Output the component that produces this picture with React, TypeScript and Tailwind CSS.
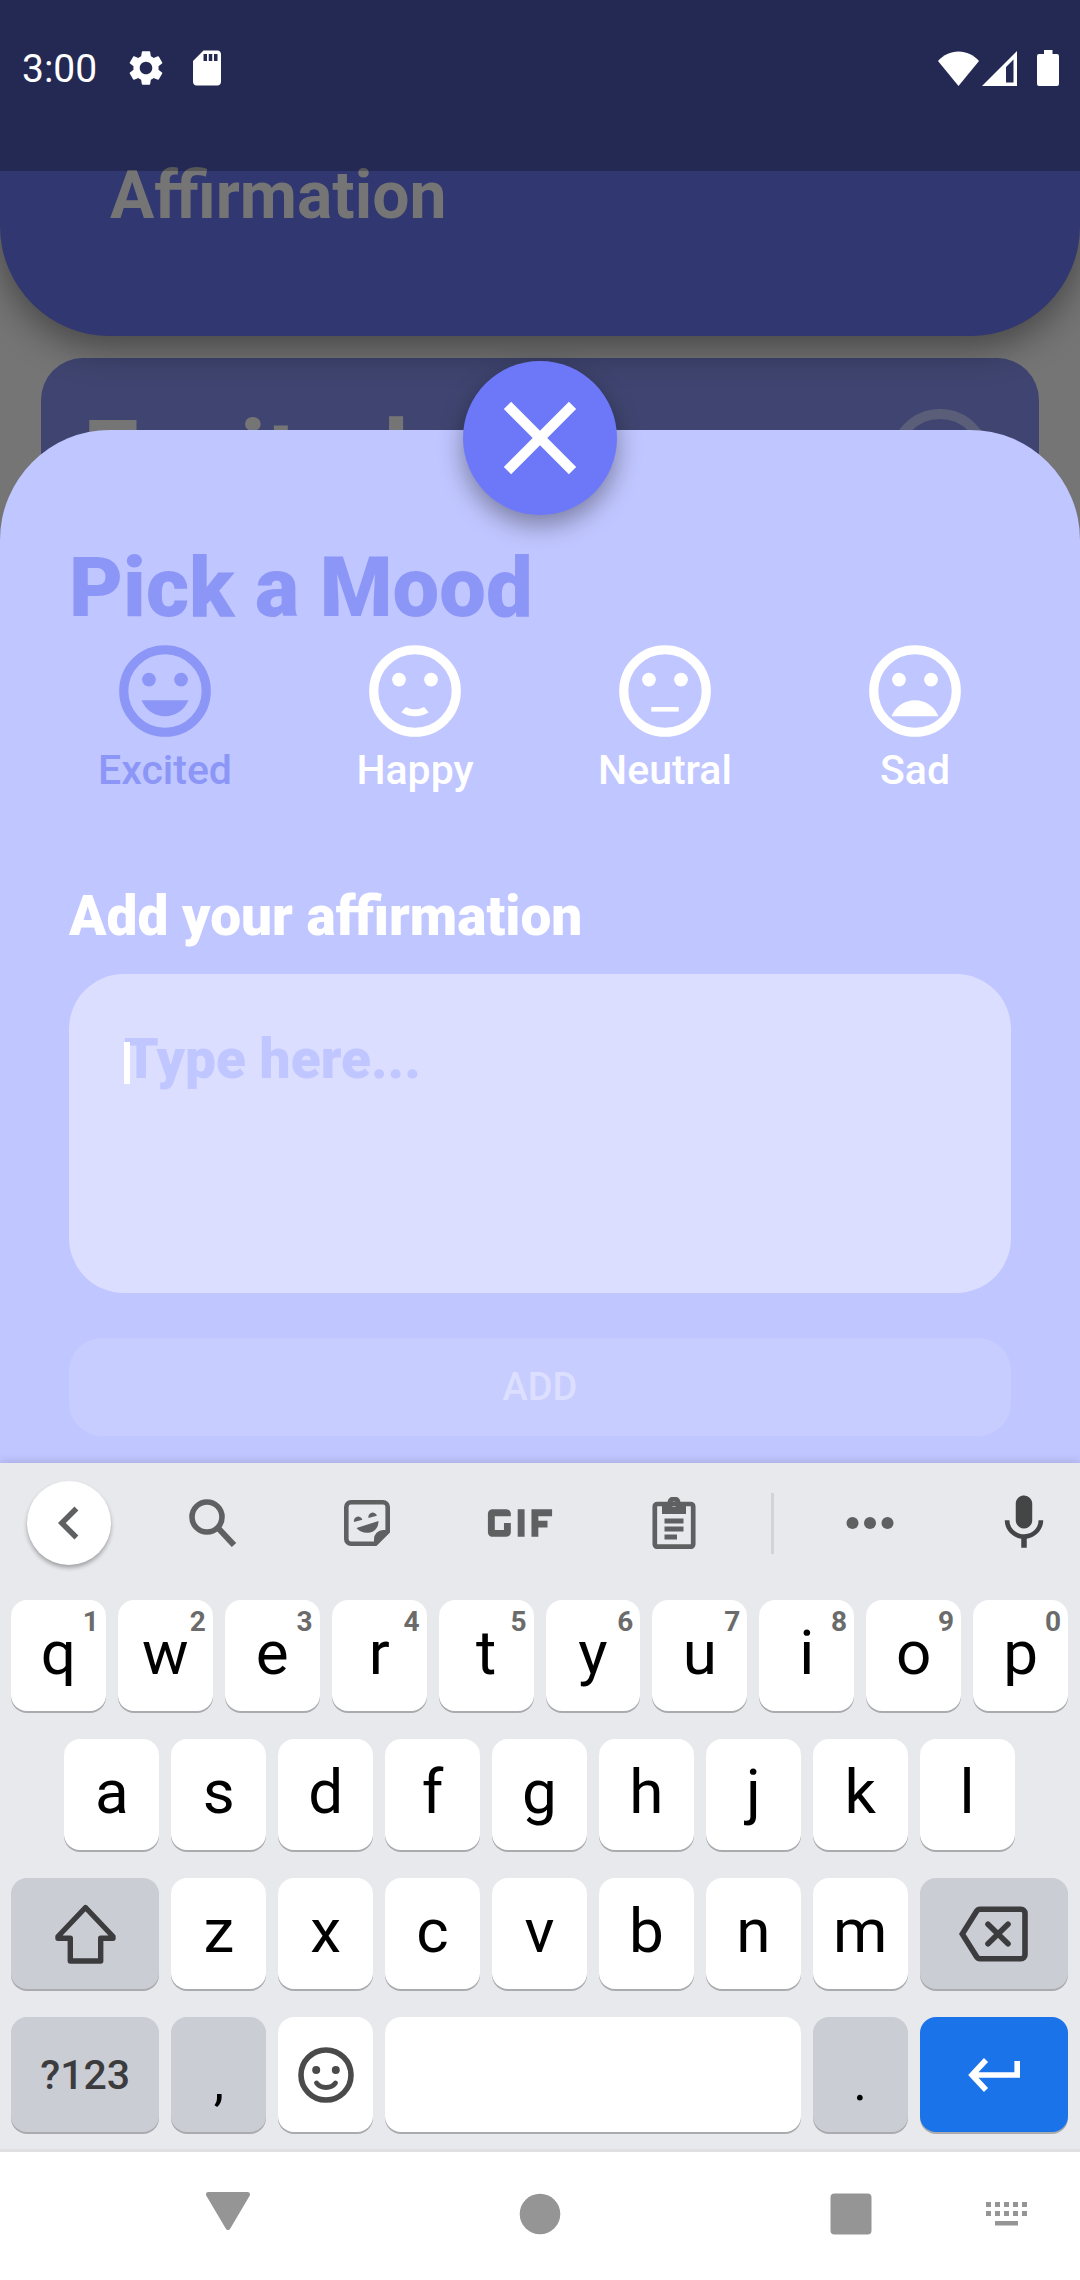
import { useState } from "react";
import type { ReactNode } from "react";
import { MdChevronLeft, MdClose, MdGif, MdMic, MdSdStorage, MdSettings } from "react-icons/md";

const MOUTHS = {
  excited: "M12 17.5c2.33 0 4.31-1.46 5.11-3.5H6.89c.8 2.04 2.78 3.5 5.11 3.5z",
  happy:
    "M12 16c-.73 0-1.38-.18-1.96-.52-.12.14-.86.98-1.01 1.15.86.55 1.87.87 2.97.87 1.11 0 2.12-.33 2.98-.88-.97-1.09-.01-.02-1.01-1.15-.59.35-1.24.53-1.97.53z",
  neutral: "M9 15.5h6v1H9z",
  sad: "M12 14c-2.33 0-4.32 1.45-5.12 3.5h10.24c-.8-2.05-2.79-3.5-5.12-3.5z",
};

type MoodId = keyof typeof MOUTHS;

const MOODS: { id: MoodId; label: string }[] = [
  { id: "excited", label: "Excited" },
  { id: "happy", label: "Happy" },
  { id: "neutral", label: "Neutral" },
  { id: "sad", label: "Sad" },
];

function Face({ mood, className }: { mood: MoodId; className: string }) {
  return (
    <svg viewBox="0 0 24 24" className={className} fill="currentColor" aria-hidden="true">
      <circle cx="12" cy="12" r="9" fill="none" stroke="currentColor" strokeWidth="2" />
      <circle cx="8.5" cy="9.5" r="1.5" />
      <circle cx="15.5" cy="9.5" r="1.5" />
      <path d={MOUTHS[mood]} />
    </svg>
  );
}

function StatusBar() {
  return (
    <div className="absolute inset-x-0 top-0 z-30 h-[171px] bg-black/25 text-white">
      <div className="flex h-[136px] items-center justify-between pr-[21px] pl-[22px]">
        <div className="flex items-center">
          <span className="pt-[2px] text-[39px] leading-none">3:00</span>
          <MdSettings className="ml-[28px] size-[42px]" />
          <MdSdStorage className="ml-[19px] size-[42px]" />
        </div>
        <div className="flex items-center">
          <svg viewBox="0 0 41 35" className="h-[35px] w-[41px]" fill="currentColor" aria-hidden="true">
            <path d="M20.5 35 0 10C5.500 4 12.500 0.500 20.500 0.500S35.500 4 41 10z" />
          </svg>
          <svg viewBox="0 0 35 35" className="ml-[3px] size-[35px]" fill="currentColor" aria-hidden="true">
            <path fillRule="evenodd" d="M0 35 35 0v35zM24 16v15.500h7.500V8.500z" />
          </svg>
          <svg viewBox="0 0 22 36" className="ml-[20px] h-[36px] w-[22px]" fill="currentColor" aria-hidden="true">
            <path d="M7 0h8.500v4H20a2 2 0 0 1 2 2v28a2 2 0 0 1-2 2H2a2 2 0 0 1-2-2V6a2 2 0 0 1 2-2h5z" />
          </svg>
        </div>
      </div>
    </div>
  );
}

function Backdrop() {
  return (
    <div>
      <header className="relative z-10 flex h-[336px] items-end rounded-b-[110px] bg-[#313770] px-[110px] pb-[101px] shadow-[0_12px_36px_rgba(0,0,0,0.4)]">
        <h1 className="text-[66px] leading-[78px] font-bold text-[#757575]">Affirmation</h1>
      </header>
      <div className="mx-[41px] mt-[22px] flex h-[180px] items-start justify-between rounded-[42px] bg-[#3f4570] pr-[39px] pl-[42px]">
        <h2 className="pt-[40px] text-[99px] leading-[116px] font-bold text-[#757575]">Excited</h2>
        <Face mood="excited" className="mt-[41px] size-[120px] text-[#5b5e78]" />
      </div>
    </div>
  );
}

function MoodSheet() {
  const [mood, setMood] = useState<MoodId>("excited");
  const [text, setText] = useState("");
  return (
    <main className="relative z-20 -mt-[108px] flex flex-1 flex-col rounded-t-[110px] bg-[#c0c6ff] px-[69px] pt-[110px] pb-[27px]">
      <button
        type="button"
        aria-label="Close"
        className="absolute -top-[69px] left-1/2 flex size-[154px] -translate-x-1/2 items-center justify-center rounded-full bg-[#6d78f8] text-white shadow-[0_10px_24px_rgba(0,0,0,0.36)]"
      >
        <MdClose className="size-[124px]" />
      </button>
      <h2 className="text-[83px] leading-[96px] font-black text-[#8b96f7]">Pick a Mood</h2>
      <div className="-mx-[29px] grid grid-cols-4">
        {MOODS.map(({ id, label }) => (
          <button
            key={id}
            type="button"
            aria-pressed={mood === id}
            onClick={() => setMood(id)}
            className={
              mood === id
                ? "flex flex-col items-center text-[#8b96f7]"
                : "flex flex-col items-center text-white"
            }
          >
            <Face mood={id} className="size-[110px]" />
            <span className="text-[41px] leading-[48px] font-medium">{label}</span>
          </button>
        ))}
      </div>
      <label htmlFor="affirmation" className="mt-[90px] text-[55px] leading-[64px] font-black text-white">
        Add your affirmation
      </label>
      <div className="relative mt-[26px]">
        <textarea
          id="affirmation"
          value={text}
          onChange={(event) => setText(event.target.value)}
          placeholder="Type here..."
          className="block h-[319px] w-full resize-none rounded-[55px] bg-[#dbdefe] px-[55px] pt-[53px] text-[55px] leading-[64px] font-black text-white caret-white outline-none placeholder:text-[#c0c6ff]"
        />
        <span className="absolute top-[68px] left-[55px] h-[42px] w-[6px] bg-white" />
      </div>
      <button
        type="button"
        disabled
        className="mt-[45px] h-[98px] rounded-[33px] bg-[#c8cdff] text-[38px] font-medium text-[#dcdfff]"
      >
        ADD
      </button>
    </main>
  );
}

function Tool({ label, children, className }: { label: string; children: ReactNode; className: string }) {
  return (
    <button type="button" aria-label={label} className={className}>
      {children}
    </button>
  );
}

const TOOL = "flex h-[84px] flex-1 items-center justify-center";

function Toolbar() {
  return (
    <div className="flex h-[137px] items-start pt-[18px] text-[#5f6062]">
      <Tool
        label="Back"
        className="mr-[25px] ml-[27px] flex size-[84px] items-center justify-center rounded-full bg-white shadow-[0_3px_4px_rgba(0,0,0,0.3)]"
      >
        <MdChevronLeft className="size-[66px]" />
      </Tool>
      <Tool label="Search" className={TOOL}>
        <svg viewBox="0 0 48 48" className="size-[48px]" fill="none" stroke="currentColor" strokeWidth="5.6" aria-hidden="true">
          <circle cx="18" cy="18" r="15" />
          <path d="M30 30 45 46" strokeWidth="6" />
        </svg>
      </Tool>
      <Tool label="Stickers" className={TOOL}>
        <svg viewBox="0 0 46 46" className="size-[46px]" fill="currentColor" aria-hidden="true">
          <path
            d="M7 2.300H39a4.700 4.700 0 0 1 4.700 4.700V31.500L31.500 43.700H7A4.700 4.700 0 0 1 2.300 39V7A4.700 4.700 0 0 1 7 2.300z"
            fill="none"
            stroke="currentColor"
            strokeWidth="4.600"
          />
          <path d="M30 45V39a9 9 0 0 1 9-9h6z" />
          <path d="M10 22a4.300 4.300 0 1 1 8.400-2.200z" />
          <path d="M24.500 18a4.300 4.300 0 1 1 8.400-2.200z" />
          <path d="M12.500 28 34.500 21C34.500 35 18 35.500 12.500 28z" />
        </svg>
      </Tool>
      <Tool label="GIF" className={TOOL}>
        <MdGif className="size-[110px]" />
      </Tool>
      <Tool label="Clipboard" className={TOOL}>
        <svg viewBox="0 0 44 52" className="h-[52px] w-[44px]" fill="currentColor" aria-hidden="true">
          <rect x="2.800" y="7" width="38.400" height="42.700" rx="2.500" fill="none" stroke="currentColor" strokeWidth="4.700" />
          <path fillRule="evenodd" d="M10 17V5h5.500a6.600 6.600 0 0 1 13 0H34v12zM22 4.600a2.600 2.600 0 1 0 0 5.200 2.600 2.600 0 0 0 0-5.200z" />
          <path d="M12.500 21.500h19v5h-19zM12.500 29.500h19v5h-19zM12.500 37.500h12.500v5h-12.500z" />
        </svg>
      </Tool>
      <div className="mx-[20px] mt-[12px] h-[61px] w-[3px] bg-[#d1d3d6]" />
      <Tool label="More" className="flex h-[84px] w-[151px] items-center justify-center">
        <svg viewBox="0 0 48 12" className="h-[12px] w-[48px]" fill="currentColor" aria-hidden="true">
          <circle cx="6.500" cy="6" r="6" />
          <circle cx="24" cy="6" r="6" />
          <circle cx="41.500" cy="6" r="6" />
        </svg>
      </Tool>
      <Tool
        label="Voice input"
        className="flex h-[84px] w-[135px] items-center justify-center pl-[22px] text-[#444547]"
      >
        <MdMic className="size-[66px]" />
      </Tool>
    </div>
  );
}

const LETTER =
  "relative col-span-2 flex h-[111px] items-center justify-center rounded-[16px] bg-white pb-[6px] text-[62px] leading-none text-black shadow-[0_2px_0_#a9abae]";

function Letter({ char, hint, start }: { char: string; hint?: string; start?: boolean }) {
  return (
    <button type="button" className={start ? `${LETTER} col-start-2` : LETTER}>
      {char}
      {hint && (
        <span className="absolute top-[6px] right-[7px] text-[28px] leading-[32px] font-bold text-[#6b6b6b]">
          {hint}
        </span>
      )}
    </button>
  );
}

function Keyboard() {
  return (
    <section
      aria-label="Keyboard"
      className="relative z-20 bg-[#e8e9ed] pb-[17px] shadow-[0_-2px_8px_rgba(0,0,0,0.12)]"
    >
      <Toolbar />
      <div className="grid grid-cols-20 gap-x-[12px] gap-y-[28px] pr-[12px] pl-[11px]">
        {[..."qwertyuiop"].map((char, i) => (
          <Letter key={char} char={char} hint={String((i + 1) % 10)} />
        ))}
        {[..."asdfghjkl"].map((char, i) => (
          <Letter key={char} char={char} start={i === 0} />
        ))}
        <button
          type="button"
          aria-label="Shift"
          className="col-span-3 col-start-1 flex h-[111px] items-center justify-center rounded-[16px] bg-[#cbcdd5] text-[#3c3c3e] shadow-[0_2px_0_#a9abae]"
        >
          <svg viewBox="0 0 61 60" className="h-[60px] w-[61px]" fill="none" stroke="currentColor" strokeWidth="5.400" strokeLinejoin="round" aria-hidden="true">
            <path d="M30.500 3.500 58 32.500V34.300H45.700V57H15.300V34.300H3V32.500z" />
          </svg>
        </button>
        {[..."zxcvbnm"].map((char) => (
          <Letter key={char} char={char} />
        ))}
        <button
          type="button"
          aria-label="Backspace"
          className="col-span-3 flex h-[111px] items-center justify-center rounded-[16px] bg-[#cbcdd5] text-[#3c3c3e] shadow-[0_2px_0_#a9abae]"
        >
          <svg viewBox="0 0 69 56" className="h-[56px] w-[69px]" fill="none" stroke="currentColor" strokeWidth="5.600" aria-hidden="true">
            <path d="M21 3.300H62a4 4 0 0 1 4 4V48.700a4 4 0 0 1-4 4H21a4 4 0 0 1-3.300-1.800L3.300 28 17.700 5.100A4 4 0 0 1 21 3.300z" />
            <path d="M29 18.200 49 37.800M49 18.200 29 37.800" strokeLinecap="round" />
          </svg>
        </button>
        <button
          type="button"
          className="col-span-3 flex h-[115px] items-center justify-center rounded-[16px] bg-[#cbcdd5] pt-[2px] text-[41px] leading-none font-medium text-[#3c3c3e] shadow-[0_2px_0_#a9abae]"
        >
          ?123
        </button>
        <button
          type="button"
          className="col-span-2 flex h-[115px] items-center justify-center rounded-[16px] bg-[#cbcdd5] pt-[16px] text-[52px] leading-none text-black shadow-[0_2px_0_#a9abae]"
        >
          ,
        </button>
        <button
          type="button"
          aria-label="Emoji"
          className="col-span-2 flex h-[115px] items-center justify-center rounded-[16px] bg-white text-[#4a4a4b] shadow-[0_2px_0_#a9abae]"
        >
          <svg viewBox="0 0 56 56" className="size-[56px]" fill="currentColor" aria-hidden="true">
            <circle cx="28" cy="28" r="25" fill="none" stroke="currentColor" strokeWidth="5.600" />
            <circle cx="18.200" cy="23" r="4" />
            <circle cx="37.800" cy="23" r="4" />
            <path d="M18.500 36C23 42 33 42 37.500 36" fill="none" stroke="currentColor" strokeWidth="4.800" strokeLinecap="round" />
          </svg>
        </button>
        <button
          type="button"
          aria-label="Space"
          className="col-span-8 h-[115px] rounded-[16px] bg-white shadow-[0_2px_0_#a9abae]"
        />
        <button
          type="button"
          className="col-span-2 flex h-[115px] items-center justify-center rounded-[16px] bg-[#cbcdd5] pt-[16px] text-[52px] leading-none text-black shadow-[0_2px_0_#a9abae]"
        >
          .
        </button>
        <button
          type="button"
          aria-label="Enter"
          className="col-span-3 flex h-[115px] items-center justify-center rounded-[16px] bg-[#1b73e9] text-white shadow-[0_2px_0_#a9abae]"
        >
          <svg viewBox="0 0 52 34" className="h-[34px] w-[52px]" fill="none" stroke="currentColor" strokeWidth="5.600" aria-hidden="true">
            <path d="M18 2 4 17 18 32M5 17H49.200V3" />
          </svg>
        </button>
      </div>
    </section>
  );
}

function NavigationBar() {
  return (
    <nav
      aria-label="System"
      className="relative z-20 flex h-[132px] items-center gap-[112px] border-t-[3px] border-[#dfdfe1] bg-white pr-[51px] pb-[5px] pl-[206px] text-[#959595]"
    >
      <div className="flex flex-1 items-center justify-between">
        <button type="button" aria-label="Hide keyboard">
          <svg viewBox="0 0 44 44" className="size-[44px]" fill="currentColor" stroke="currentColor" strokeWidth="5" strokeLinejoin="round" aria-hidden="true">
            <path d="M2.500 2.500h39L22 35.500z" />
          </svg>
        </button>
        <button type="button" aria-label="Home">
          <svg viewBox="0 0 44 44" className="size-[44px]" fill="currentColor" aria-hidden="true">
            <circle cx="22" cy="22" r="20.300" />
          </svg>
        </button>
        <button type="button" aria-label="Recent apps">
          <svg viewBox="0 0 44 44" className="size-[44px]" fill="currentColor" aria-hidden="true">
            <rect x="1.500" y="1.500" width="41" height="41" rx="4" />
          </svg>
        </button>
      </div>
      <button type="button" aria-label="Choose keyboard">
        <svg viewBox="0 0 44 24" className="h-[24px] w-[44px]" fill="currentColor" aria-hidden="true">
          {[1, 10, 19, 28, 37].map((x) => (
            <path key={x} d={`M${x} 0h5v5h-5zM${x} 9h5v5h-5z`} />
          ))}
          <path d="M10 19h23v4.500H10z" />
        </svg>
      </button>
    </nav>
  );
}

export default function App() {
  return (
    <div className="relative flex min-h-screen flex-col overflow-hidden bg-[#757575] font-[Roboto,sans-serif]">
      <StatusBar />
      <Backdrop />
      <MoodSheet />
      <Keyboard />
      <NavigationBar />
    </div>
  );
}
